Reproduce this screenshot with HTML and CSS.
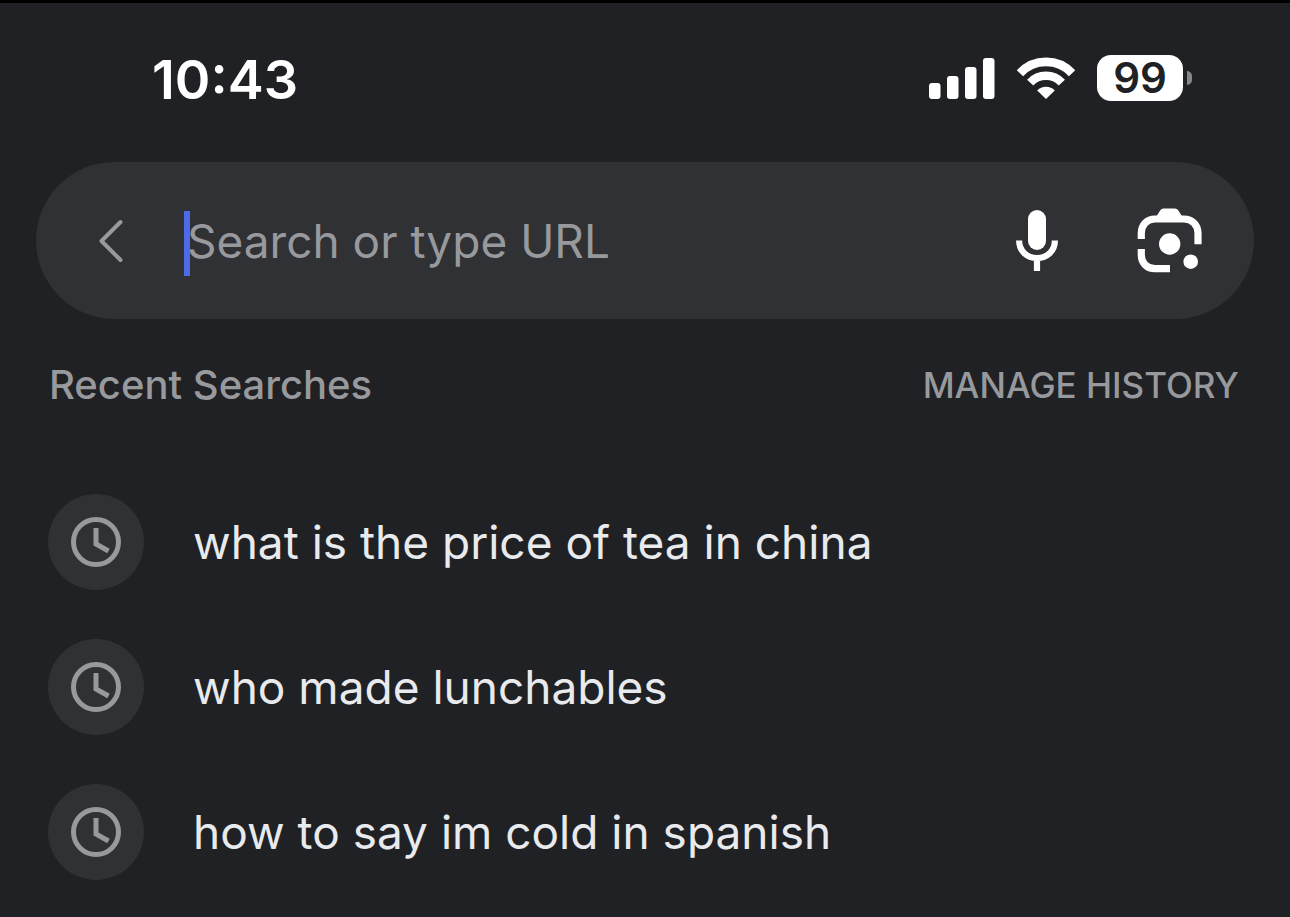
FILE: index.html
```
<!DOCTYPE html>
<html lang="en">

<head>
    <meta charset="UTF-8" />
    <meta name="viewport" content="width=device-width, initial-scale=1.0" />
    <title>Search</title>
    <link rel="stylesheet" href="styles.css">
</head>

<body>
    <header class="status-bar">
        <time class="clock">10:43</time>
        <div class="status-icons">
            <svg class="signal" viewBox="0 0 66 42" fill="#fff" aria-hidden="true">
                <rect x="0" y="26" width="11.5" height="16" rx="3" />
                <rect x="18" y="19" width="11.5" height="23" rx="3" />
                <rect x="36" y="10" width="11.5" height="32" rx="3" />
                <rect x="54" y="1" width="11.5" height="41" rx="3" />
            </svg>
            <svg class="wifi" viewBox="0 0 58 42" fill="none" stroke="#fff" stroke-width="8.6" aria-hidden="true">
                <path d="M3 16.2A35.6 35.6 0 0 1 55 16.2" />
                <path d="M13.2 25.6A21.8 21.8 0 0 1 44.8 25.6" />
                <path d="M29 42 20.2 33.4A12.2 12.2 0 0 1 37.8 33.4Z" fill="#fff" stroke="none" />
            </svg>
            <div class="battery">
                <span class="battery-level">99</span>
                <span class="battery-tip"></span>
            </div>
        </div>
    </header>

    <main>
        <form class="search">
            <button class="icon-button" type="button" aria-label="Back">
                <svg class="icon-back" viewBox="0 0 26 44" fill="none" stroke="#97999d" stroke-width="4"
                    stroke-linecap="round" stroke-linejoin="round">
                    <path d="M22.5 3 3.5 22 22.5 41" />
                </svg>
            </button>
            <span class="caret"></span>
            <input class="search-input" type="text" placeholder="Search or type URL" aria-label="Search or type URL">
            <button class="icon-button" type="button" aria-label="Voice search">
                <svg class="icon-mic" viewBox="0 0 42 62" fill="none" stroke="#fff" stroke-width="6.2">
                    <rect x="12" y="0" width="18" height="40" rx="9" fill="#fff" stroke="none" />
                    <path d="M3.1 30.5C3.1 41 11 48 21 48S38.9 41 38.9 30.5M21 47V61" />
                </svg>
            </button>
            <button class="icon-button" type="button" aria-label="Search with camera">
                <svg class="icon-lens" viewBox="0 0 65 65" fill="none" stroke="#fff" stroke-width="7.2">
                    <path d="M4.3 31V25C4.3 17 10 11 18 11H47C55 11 61 17 61 25V36.3" />
                    <path d="M4.3 41V47C4.3 55 10 60.7 18 60.7H33" />
                    <path d="M19 9 23.5 2Q24.500.5 26.500.5H38Q40 .5 41 2L45.500 9V11H19Z" fill="#fff" stroke="none" />
                    <circle cx="32.7" cy="36" r="10.7" fill="#fff" stroke="none" />
                    <circle cx="53.7" cy="53.7" r="7.3" fill="#fff" stroke="none" />
                </svg>
            </button>
        </form>

        <div class="section-head">
            <h1>Recent Searches</h1>
            <a href="#history">MANAGE HISTORY</a>
        </div>

        <ul class="history">
            <li>
                <a href="#tea">
                    <span class="badge">
                        <svg class="icon-clock" viewBox="0 0 52 52" fill="none" stroke="#97999d" stroke-width="5">
                            <circle cx="26" cy="26" r="22.5" />
                            <path d="M26 12V28L38.5 35" />
                        </svg>
                    </span>
                    what is the price of tea in china
                </a>
            </li>
            <li>
                <a href="#lunchables">
                    <span class="badge">
                        <svg class="icon-clock" viewBox="0 0 52 52" fill="none" stroke="#97999d" stroke-width="5">
                            <circle cx="26" cy="26" r="22.5" />
                            <path d="M26 12V28L38.5 35" />
                        </svg>
                    </span>
                    who made lunchables
                </a>
            </li>
            <li>
                <a href="#spanish">
                    <span class="badge">
                        <svg class="icon-clock" viewBox="0 0 52 52" fill="none" stroke="#97999d" stroke-width="5">
                            <circle cx="26" cy="26" r="22.5" />
                            <path d="M26 12V28L38.5 35" />
                        </svg>
                    </span>
                    how to say im cold in spanish
                </a>
            </li>
        </ul>
    </main>
</body>

</html>
```
FILE: styles.css
```
:root {
    --bg: #202124;
    --surface: #303134;
    --txt-primary: #e8eaed;
    --txt-muted: #97999d;
    --caret: #4e6ae6;
}

* {
    box-sizing: border-box;
    margin: 0;
    padding: 0;
}

body {
    font-family: "Inter", sans-serif;
    background: var(--bg);
    color: var(--txt-primary);
    min-height: 100vh;
    border-top: 3px solid #000;
}

svg {
    display: block;
}

a {
    color: inherit;
    text-decoration: none;
}

.status-bar {
    display: flex;
    align-items: center;
    justify-content: space-between;
    padding: 44px 98px 50px 152px;
}

.clock {
    color: #fff;
    font-size: 54px;
    font-weight: 600;
    line-height: 65px;
}

.status-icons {
    display: flex;
    align-items: center;
    gap: 22px;
    padding-bottom: 4px;
}

.signal {
    width: 66px;
    height: 42px;
}

.wifi {
    width: 58px;
    height: 42px;
}

.battery {
    display: flex;
    align-items: center;
    gap: 4px;
}

.battery-level {
    width: 86px;
    border-radius: 14px;
    background: #fff;
    color: var(--bg);
    font-size: 42px;
    font-weight: 600;
    line-height: 46px;
    text-align: center;
}

.battery-tip {
    width: 5px;
    height: 14px;
    border-radius: 0 7px 7px 0;
    background: #85868a;
}

.search {
    display: flex;
    align-items: center;
    height: 157px;
    margin: 0 36px;
    padding: 0 52px 0 62px;
    border-radius: 80px;
    background: var(--surface);
}

.icon-button {
    flex: none;
    border: none;
    background: none;
    cursor: pointer;
}

.icon-back {
    width: 26px;
    height: 44px;
}

.caret {
    flex: none;
    width: 6px;
    height: 65px;
    margin: 6px 0 0 60px;
    background: var(--caret);
}

.search-input {
    flex: 1;
    min-width: 0;
    margin-left: -3px;
    border: none;
    outline: none;
    background: none;
    color: var(--txt-primary);
    font-family: inherit;
    font-size: 46px;
    line-height: 60px;
}

.search-input::placeholder {
    color: var(--txt-muted);
    opacity: 1;
}

.icon-mic {
    width: 42px;
    height: 62px;
    margin-right: 79px;
}

.icon-lens {
    width: 65px;
    height: 65px;
}

.section-head {
    display: flex;
    align-items: center;
    justify-content: space-between;
    padding: 42px 51px 0 49px;
    color: var(--txt-muted);
    line-height: 48px;
}

.section-head h1 {
    font-size: 40px;
    font-weight: 500;
}

.section-head a {
    font-size: 35px;
    font-weight: 500;
}

.history {
    display: grid;
    gap: 49px;
    padding: 85px 48px 36px;
    list-style: none;
}

.history a {
    display: flex;
    align-items: center;
    gap: 49px;
    font-size: 46px;
    line-height: 56px;
}

.badge {
    flex: none;
    display: grid;
    place-items: center;
    width: 96px;
    height: 96px;
    border-radius: 50%;
    background: var(--surface);
}

.icon-clock {
    width: 52px;
    height: 52px;
}
```
